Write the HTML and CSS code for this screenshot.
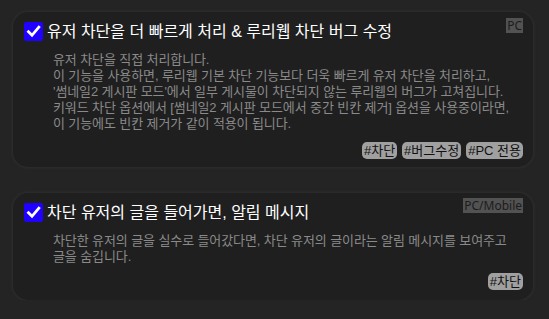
FILE: index.html
```html
<!DOCTYPE html>
<html lang="ko">
<head>
<meta charset="utf-8">
<link rel="stylesheet" href="styles.css">
</head>
<body>
<div class="list">
  <section class="card">
    <span class="platform">PC</span>
    <div class="head">
      <span class="check"><svg viewBox="0 0 19 19" width="19" height="19"><path d="M4.5 9.8 L8 13.3 L14.8 5.2" fill="none" stroke="#fff" stroke-width="2.8" stroke-linecap="square"/></svg></span>
      <h2 class="title">유저 차단을 더 빠르게 처리 &amp; 루리웹 차단 버그 수정</h2>
    </div>
    <p class="desc">유저 차단을 직접 처리합니다.<br>이 기능을 사용하면, 루리웹 기본 차단 기능보다 더욱 빠르게 유저 차단을 처리하고,<br>'썸네일2 게시판 모드'에서 일부 게시물이 차단되지 않는 루리웹의 버그가 고쳐집니다.<br>키워드 차단 옵션에서 [썸네일2 게시판 모드에서 중간 빈칸 제거] 옵션을 사용중이라면,<br>이 기능에도 빈칸 제거가 같이 적용이 됩니다.</p>
    <div class="tags">
      <span class="tag">#차단</span>
      <span class="tag">#버그수정</span>
      <span class="tag">#PC 전용</span>
    </div>
  </section>
  <section class="card card2">
    <span class="platform">PC/Mobile</span>
    <div class="head">
      <span class="check"><svg viewBox="0 0 19 19" width="19" height="19"><path d="M4.5 9.8 L8 13.3 L14.8 5.2" fill="none" stroke="#fff" stroke-width="2.8" stroke-linecap="square"/></svg></span>
      <h2 class="title">차단 유저의 글을 들어가면, 알림 메시지</h2>
    </div>
    <p class="desc">차단한 유저의 글을 실수로 들어갔다면, 차단 유저의 글이라는 알림 메시지를 보여주고<br>글을 숨깁니다.</p>
    <div class="tags">
      <span class="tag">#차단</span>
    </div>
  </section>
</div>
</body>
</html>
```

FILE: styles.css
```css
html, body {
  margin: 0;
  padding: 0;
  background: #242424;
}
body {
  font-family: "Liberation Sans", "Noto Sans CJK KR", sans-serif;
}
.list {
  width: 520px;
  padding: 12px 0 0 13px;
  display: flex;
  flex-direction: column;
  gap: 26px;
}
.card {
  position: relative;
  background: #1f1f1f;
  border-radius: 15px;
  box-shadow: 0 0 3px 1px #2f2f2f;
  padding: 10px 10px 8px 11px;
}
.card2 {
  padding-bottom: 10px;
}
.head {
  display: flex;
  align-items: center;
  gap: 4px;
  height: 19px;
}
.check {
  width: 19px;
  height: 19px;
  background: #2000ff;
  border-radius: 2px;
  display: block;
  flex: none;
}
.check svg {
  display: block;
}
.title {
  margin: 0;
  font-size: 16px;
  font-weight: 400;
  color: #ffffff;
  line-height: 19px;
  white-space: nowrap;
}
.desc {
  margin: 11px 0 0 29px;
  font-size: 13px;
  letter-spacing: -0.1px;
  line-height: 16px;
  color: #8a8a8a;
  white-space: nowrap;
}
.tags {
  display: flex;
  justify-content: flex-end;
  gap: 5px;
  margin-top: 10px;
}
.card2 .tags {
  margin-top: 8px;
}
.tag {
  background: #a0a0a0;
  color: #111;
  font-size: 13px;
  line-height: 17px;
  height: 17px;
  padding: 0 2px;
  border-radius: 5px;
}
.platform {
  position: absolute;
  top: 6px;
  right: 10px;
  background: #525252;
  color: #1c1c1c;
  font-family: "Noto Sans", sans-serif;
  font-size: 12px;
  line-height: 15px;
  height: 15px;
  padding: 0 1px;
}
.card2 .platform {
  top: 5px;
}
```
